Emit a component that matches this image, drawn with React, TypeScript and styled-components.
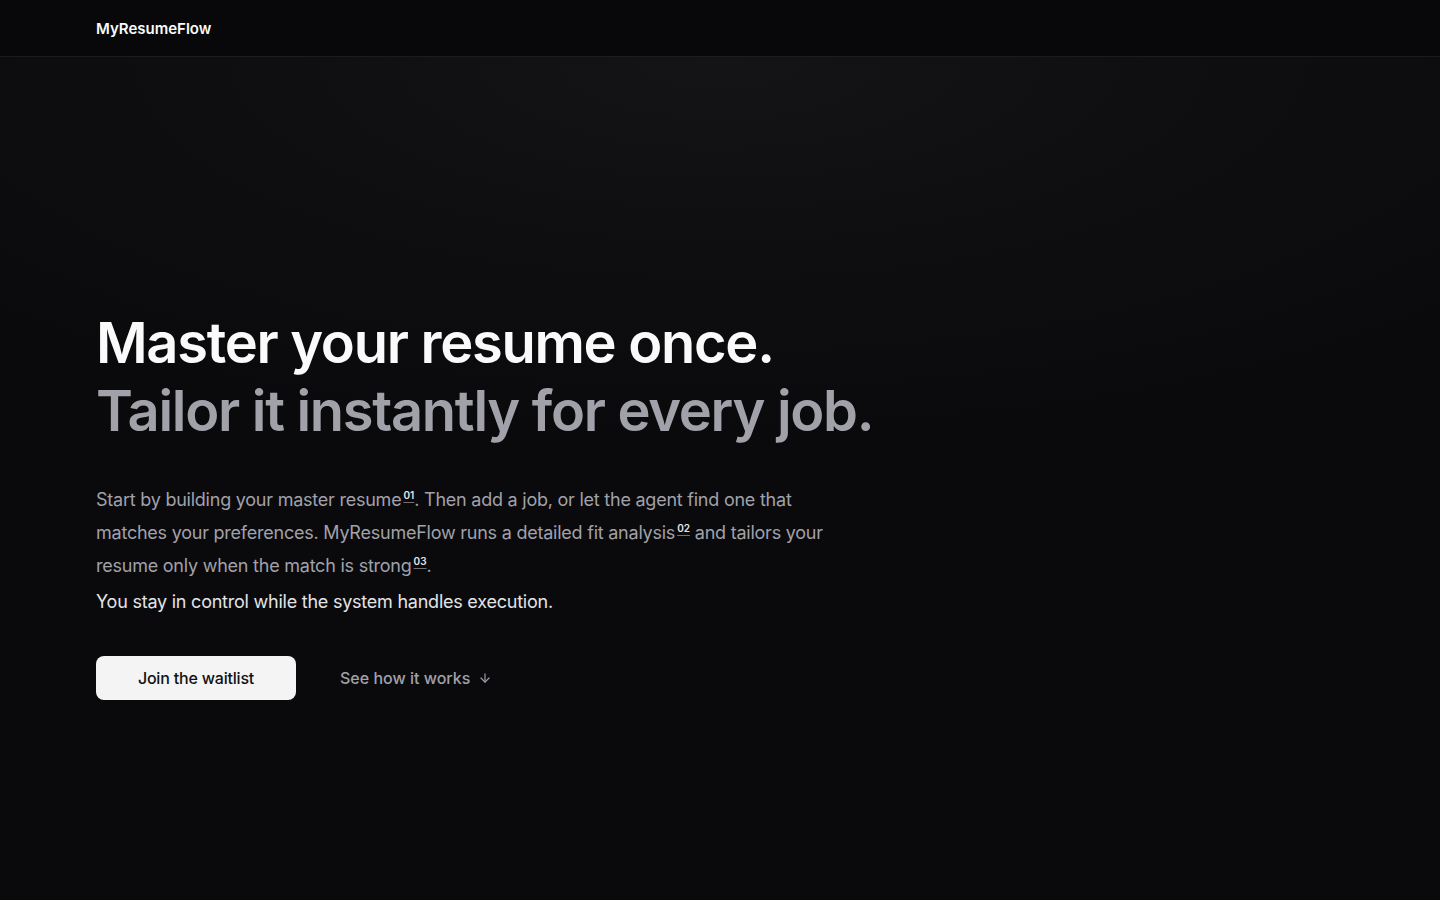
import styled, { createGlobalStyle } from 'styled-components';

const GlobalStyle = createGlobalStyle`
	html, body {
		margin: 0;
		padding: 0;
		background: #0a0a0c;
	}
	body {
		font-family: Inter, 'Noto Sans', sans-serif;
		color: #fafafa;
		-webkit-font-smoothing: antialiased;
	}
	* {
		box-sizing: border-box;
	}
`;

const Page = styled.div`
	min-height: 900px;
	display: flex;
	flex-direction: column;
	background: #0a0a0c;
`;

const Header = styled.header`
	height: 57px;
	display: flex;
	align-items: center;
	padding: 0 96px;
	background: #08080a;
	border-bottom: 1px solid #1c1c20;
`;

const Logo = styled.div`
	font-size: 15px;
	font-weight: 600;
	color: #fafafa;
`;

const Hero = styled.section`
	flex: 1;
	display: flex;
	flex-direction: column;
	padding: 252px 96px 0;
	background: radial-gradient(ellipse 70% 45% at 50% 0%, #141416 0%, #0f0f11 45%, #0a0a0c 100%);
`;

const Title = styled.h1`
	margin: 0;
	font-size: 56px;
	line-height: 68px;
	font-weight: 600;
	letter-spacing: -0.023em;
`;

const TitleLine = styled.span<{ $muted?: boolean }>`
	display: block;
	color: ${(p) => (p.$muted ? '#a1a1aa' : '#fafafa')};
`;

const Lead = styled.p`
	margin: 38px 0 0;
	max-width: 736px;
	font-size: 18px;
	line-height: 33px;
	letter-spacing: -0.013em;
	color: #a1a1aa;
`;

const Note = styled.sup`
	font-size: 10px;
	font-weight: 600;
	letter-spacing: 0;
	color: #e4e4e7;
	margin-left: 2px;
	text-decoration: underline;
	text-underline-offset: 3px;
	text-decoration-color: #71717a;
	vertical-align: 7px;
	line-height: 0;
`;

const Strong = styled.p`
	margin: 5px 0 0;
	font-size: 18px;
	line-height: 30px;
	letter-spacing: -0.013em;
	color: #e4e4e7;
`;

const Actions = styled.div`
	display: flex;
	align-items: center;
	gap: 44px;
	margin-top: 39px;
`;

const PrimaryButton = styled.button`
	width: 200px;
	height: 44px;
	border: none;
	border-radius: 8px;
	background: #f4f4f5;
	color: #111113;
	font-family: Inter, sans-serif;
	font-size: 16px;
	font-weight: 500;
	letter-spacing: -0.012em;
	cursor: pointer;
`;

const GhostLink = styled.a`
	display: flex;
	align-items: center;
	gap: 8px;
	font-size: 16px;
	font-weight: 500;
	color: #a1a1aa;
	text-decoration: none;
	cursor: pointer;
`;

export default function App() {
	return (
		<>
			<GlobalStyle />
			<Page>
				<Header>
					<Logo>MyResumeFlow</Logo>
				</Header>
				<Hero>
					<Title>
						<TitleLine>Master your resume once.</TitleLine>
						<TitleLine $muted>Tailor it instantly for every job.</TitleLine>
					</Title>
					<Lead>
						Start by building your master resume<Note>01</Note>. Then add a job, or let the agent find one that
						matches your preferences. MyResumeFlow runs a detailed fit analysis<Note>02</Note> and tailors your
						resume only when the match is strong<Note>03</Note>.
					</Lead>
					<Strong>You stay in control while the system handles execution.</Strong>
					<Actions>
						<PrimaryButton>Join the waitlist</PrimaryButton>
						<GhostLink>
							See how it works
							<svg width="14" height="14" viewBox="0 0 24 24" fill="none" stroke="currentColor" strokeWidth="2" strokeLinecap="round" strokeLinejoin="round">
								<path d="M12 5v14" />
								<path d="m19 12-7 7-7-7" />
							</svg>
						</GhostLink>
					</Actions>
				</Hero>
			</Page>
		</>
	);
}
